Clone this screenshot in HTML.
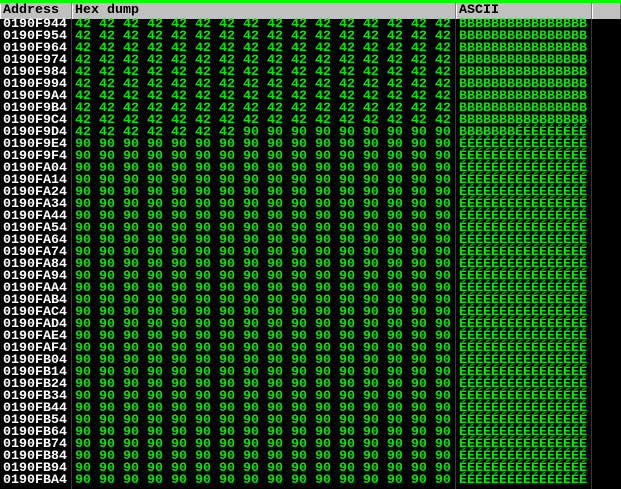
<!DOCTYPE html>
<html><head><meta charset="utf-8"><style>
html,body{margin:0;padding:0;background:#000;width:621px;height:489px;overflow:hidden;position:relative}
.top{position:absolute;left:0;top:0;width:621px;height:3px;background:#00ff00}
.hdr{position:absolute;top:3px;height:16px;background:#c0c0c0;border-right:1px solid #808080;border-left:1px solid #fff;box-sizing:border-box;font:bold 13.33px/16px "Liberation Mono",monospace;color:#000;padding-left:2px}
pre{position:absolute;margin:0;font:bold 13.33px/12px "Liberation Mono",monospace;top:19px}
.vl{position:absolute;top:19px;bottom:0;width:1px;background:#006000}
</style></head><body>
<div class="top"></div>
<div class="hdr" style="left:0;width:72px">Address</div>
<div class="hdr" style="left:72px;width:384px">Hex dump</div>
<div class="hdr" style="left:456px;width:136px">ASCII</div>
<div class="hdr" style="left:592px;width:29px"></div>
<div class="vl" style="left:71px"></div>
<div class="vl" style="left:455px"></div>
<div class="vl" style="left:591px"></div>
<pre style="left:3px;color:#fff">0190F944
0190F954
0190F964
0190F974
0190F984
0190F994
0190F9A4
0190F9B4
0190F9C4
0190F9D4
0190F9E4
0190F9F4
0190FA04
0190FA14
0190FA24
0190FA34
0190FA44
0190FA54
0190FA64
0190FA74
0190FA84
0190FA94
0190FAA4
0190FAB4
0190FAC4
0190FAD4
0190FAE4
0190FAF4
0190FB04
0190FB14
0190FB24
0190FB34
0190FB44
0190FB54
0190FB64
0190FB74
0190FB84
0190FB94
0190FBA4</pre>
<pre style="left:75px;color:#00e800">42 42 42 42 42 42 42 42 42 42 42 42 42 42 42 42
42 42 42 42 42 42 42 42 42 42 42 42 42 42 42 42
42 42 42 42 42 42 42 42 42 42 42 42 42 42 42 42
42 42 42 42 42 42 42 42 42 42 42 42 42 42 42 42
42 42 42 42 42 42 42 42 42 42 42 42 42 42 42 42
42 42 42 42 42 42 42 42 42 42 42 42 42 42 42 42
42 42 42 42 42 42 42 42 42 42 42 42 42 42 42 42
42 42 42 42 42 42 42 42 42 42 42 42 42 42 42 42
42 42 42 42 42 42 42 42 42 42 42 42 42 42 42 42
42 42 42 42 42 42 42 90 90 90 90 90 90 90 90 90
90 90 90 90 90 90 90 90 90 90 90 90 90 90 90 90
90 90 90 90 90 90 90 90 90 90 90 90 90 90 90 90
90 90 90 90 90 90 90 90 90 90 90 90 90 90 90 90
90 90 90 90 90 90 90 90 90 90 90 90 90 90 90 90
90 90 90 90 90 90 90 90 90 90 90 90 90 90 90 90
90 90 90 90 90 90 90 90 90 90 90 90 90 90 90 90
90 90 90 90 90 90 90 90 90 90 90 90 90 90 90 90
90 90 90 90 90 90 90 90 90 90 90 90 90 90 90 90
90 90 90 90 90 90 90 90 90 90 90 90 90 90 90 90
90 90 90 90 90 90 90 90 90 90 90 90 90 90 90 90
90 90 90 90 90 90 90 90 90 90 90 90 90 90 90 90
90 90 90 90 90 90 90 90 90 90 90 90 90 90 90 90
90 90 90 90 90 90 90 90 90 90 90 90 90 90 90 90
90 90 90 90 90 90 90 90 90 90 90 90 90 90 90 90
90 90 90 90 90 90 90 90 90 90 90 90 90 90 90 90
90 90 90 90 90 90 90 90 90 90 90 90 90 90 90 90
90 90 90 90 90 90 90 90 90 90 90 90 90 90 90 90
90 90 90 90 90 90 90 90 90 90 90 90 90 90 90 90
90 90 90 90 90 90 90 90 90 90 90 90 90 90 90 90
90 90 90 90 90 90 90 90 90 90 90 90 90 90 90 90
90 90 90 90 90 90 90 90 90 90 90 90 90 90 90 90
90 90 90 90 90 90 90 90 90 90 90 90 90 90 90 90
90 90 90 90 90 90 90 90 90 90 90 90 90 90 90 90
90 90 90 90 90 90 90 90 90 90 90 90 90 90 90 90
90 90 90 90 90 90 90 90 90 90 90 90 90 90 90 90
90 90 90 90 90 90 90 90 90 90 90 90 90 90 90 90
90 90 90 90 90 90 90 90 90 90 90 90 90 90 90 90
90 90 90 90 90 90 90 90 90 90 90 90 90 90 90 90
90 90 90 90 90 90 90 90 90 90 90 90 90 90 90 90</pre>
<pre style="left:459px;color:#00e800">BBBBBBBBBBBBBBBB
BBBBBBBBBBBBBBBB
BBBBBBBBBBBBBBBB
BBBBBBBBBBBBBBBB
BBBBBBBBBBBBBBBB
BBBBBBBBBBBBBBBB
BBBBBBBBBBBBBBBB
BBBBBBBBBBBBBBBB
BBBBBBBBBBBBBBBB
BBBBBBBÉÉÉÉÉÉÉÉÉ
ÉÉÉÉÉÉÉÉÉÉÉÉÉÉÉÉ
ÉÉÉÉÉÉÉÉÉÉÉÉÉÉÉÉ
ÉÉÉÉÉÉÉÉÉÉÉÉÉÉÉÉ
ÉÉÉÉÉÉÉÉÉÉÉÉÉÉÉÉ
ÉÉÉÉÉÉÉÉÉÉÉÉÉÉÉÉ
ÉÉÉÉÉÉÉÉÉÉÉÉÉÉÉÉ
ÉÉÉÉÉÉÉÉÉÉÉÉÉÉÉÉ
ÉÉÉÉÉÉÉÉÉÉÉÉÉÉÉÉ
ÉÉÉÉÉÉÉÉÉÉÉÉÉÉÉÉ
ÉÉÉÉÉÉÉÉÉÉÉÉÉÉÉÉ
ÉÉÉÉÉÉÉÉÉÉÉÉÉÉÉÉ
ÉÉÉÉÉÉÉÉÉÉÉÉÉÉÉÉ
ÉÉÉÉÉÉÉÉÉÉÉÉÉÉÉÉ
ÉÉÉÉÉÉÉÉÉÉÉÉÉÉÉÉ
ÉÉÉÉÉÉÉÉÉÉÉÉÉÉÉÉ
ÉÉÉÉÉÉÉÉÉÉÉÉÉÉÉÉ
ÉÉÉÉÉÉÉÉÉÉÉÉÉÉÉÉ
ÉÉÉÉÉÉÉÉÉÉÉÉÉÉÉÉ
ÉÉÉÉÉÉÉÉÉÉÉÉÉÉÉÉ
ÉÉÉÉÉÉÉÉÉÉÉÉÉÉÉÉ
ÉÉÉÉÉÉÉÉÉÉÉÉÉÉÉÉ
ÉÉÉÉÉÉÉÉÉÉÉÉÉÉÉÉ
ÉÉÉÉÉÉÉÉÉÉÉÉÉÉÉÉ
ÉÉÉÉÉÉÉÉÉÉÉÉÉÉÉÉ
ÉÉÉÉÉÉÉÉÉÉÉÉÉÉÉÉ
ÉÉÉÉÉÉÉÉÉÉÉÉÉÉÉÉ
ÉÉÉÉÉÉÉÉÉÉÉÉÉÉÉÉ
ÉÉÉÉÉÉÉÉÉÉÉÉÉÉÉÉ
ÉÉÉÉÉÉÉÉÉÉÉÉÉÉÉÉ</pre>
</body></html>
